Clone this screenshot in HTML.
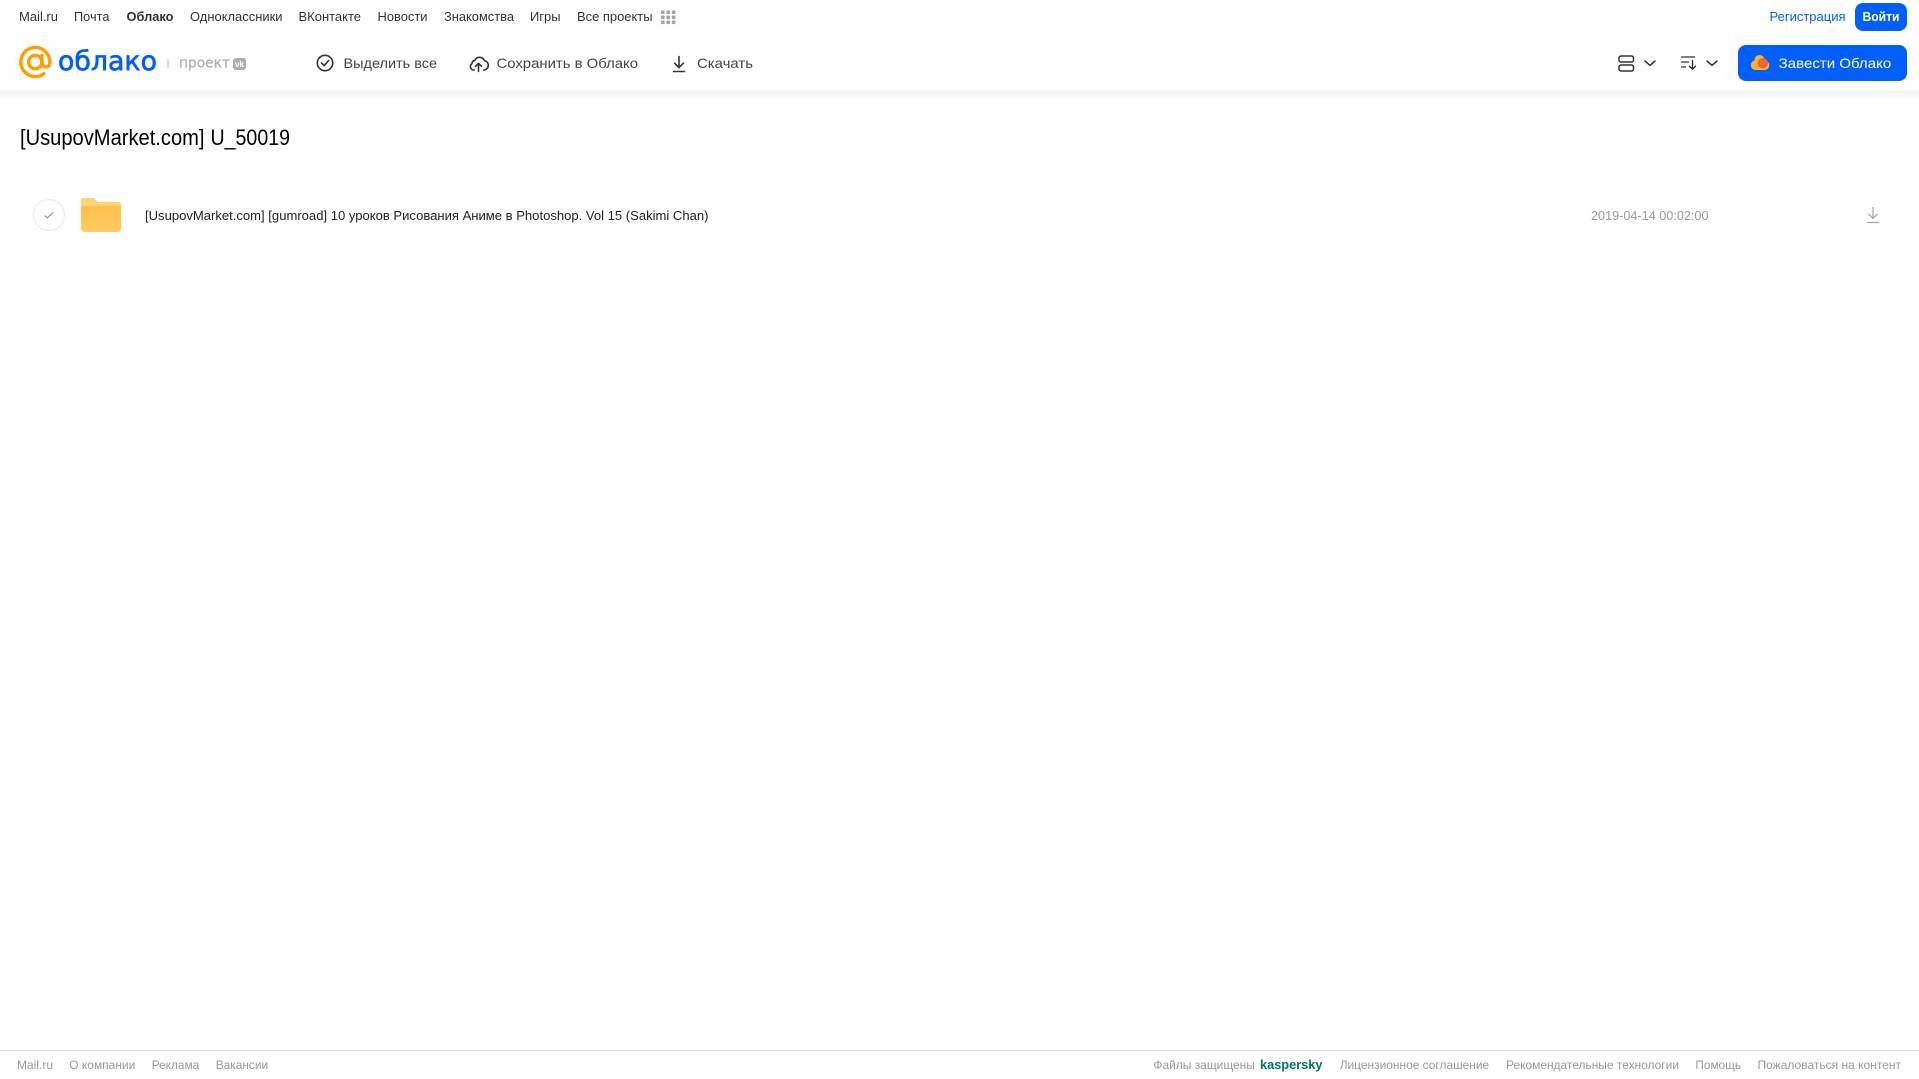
<!DOCTYPE html>
<html lang="ru"><head><meta charset="utf-8"><title>Облако</title>
<style>
html,body{margin:0;padding:0;background:#fff;width:1919px;height:1079px;overflow:hidden}
svg{display:block;position:absolute;left:0;top:0}
text{font-family:"Liberation Sans",sans-serif;white-space:pre}
.n{font-size:13px;fill:#333}
.h{font-size:14px;fill:#444}
.f{font-size:12px;fill:#999}
</style></head><body>
<svg width="1919" height="1079" viewBox="0 0 1919 1079" xmlns="http://www.w3.org/2000/svg">
<defs>
<linearGradient id="s" x1="0" y1="0" x2="0" y2="1"><stop offset="0" stop-color="#f3f3f3"/><stop offset="1" stop-color="#fff"/></linearGradient>
<linearGradient id="fo" x1="0" y1="0" x2="0" y2="1"><stop offset="0" stop-color="#ffc043"/><stop offset="1" stop-color="#ffca62"/></linearGradient>
</defs>
<rect x="0" y="90" width="1919" height="12" fill="url(#s)"/>

<!-- top nav -->
<g class="n">
<text class="n" x="19" y="21" textLength="39" lengthAdjust="spacingAndGlyphs">Mail.ru</text>
<text class="n" x="74" y="21" textLength="35.5" lengthAdjust="spacingAndGlyphs">Почта</text>
<text class="n" x="126.5" y="21" textLength="47" lengthAdjust="spacingAndGlyphs" font-weight="700">Облако</text>
<text class="n" x="190" y="21" textLength="92.5" lengthAdjust="spacingAndGlyphs">Одноклассники</text>
<text class="n" x="298.5" y="21" textLength="62.5" lengthAdjust="spacingAndGlyphs">ВКонтакте</text>
<text class="n" x="377.5" y="21" textLength="50" lengthAdjust="spacingAndGlyphs">Новости</text>
<text class="n" x="444" y="21" textLength="70" lengthAdjust="spacingAndGlyphs">Знакомства</text>
<text class="n" x="530" y="21" textLength="30.5" lengthAdjust="spacingAndGlyphs">Игры</text>
<text class="n" x="577" y="21" textLength="75.5" lengthAdjust="spacingAndGlyphs">Все проекты</text>
</g>
<g fill="#a3a3a3">
<rect x="661" y="10.5" width="3.6" height="3.6" rx=".8"/><rect x="666.4" y="10.5" width="3.6" height="3.6" rx=".8"/><rect x="671.8" y="10.5" width="3.6" height="3.6" rx=".8"/>
<rect x="661" y="15.5" width="3.6" height="3.6" rx=".8"/><rect x="666.4" y="15.5" width="3.6" height="3.6" rx=".8"/><rect x="671.8" y="15.5" width="3.6" height="3.6" rx=".8"/>
<rect x="661" y="20.5" width="3.6" height="3.6" rx=".8"/><rect x="666.4" y="20.5" width="3.6" height="3.6" rx=".8"/><rect x="671.8" y="20.5" width="3.6" height="3.6" rx=".8"/>
</g>
<text x="1769.5" y="21" font-size="13" fill="#005ff9" textLength="76" lengthAdjust="spacingAndGlyphs">Регистрация</text>
<rect x="1855" y="3" width="52" height="28" rx="8" fill="#005ff9"/>
<text x="1862.5" y="21" font-size="13" font-weight="700" fill="#fff" textLength="37" lengthAdjust="spacingAndGlyphs">Войти</text>

<!-- logo -->
<g fill="none" stroke="#ff9e00">
<circle cx="35.3" cy="62" r="6.7" stroke-width="3.4"/>
<path d="M42 55.5V63a3.9 3.9 0 0 0 7.8 0v-1a14.5 14.5 0 1 0-5.8 11.6" stroke-width="3.4" stroke-linecap="round"/>
</g>
<text x="58" y="70" font-size="27" style="font-family:'DejaVu Sans',sans-serif" fill="#005ff9" stroke="#005ff9" stroke-width=".7" textLength="99" lengthAdjust="spacingAndGlyphs">облако</text>
<rect x="167.5" y="59" width="1" height="9" fill="#b5b5b5"/>
<text x="179" y="67.5" font-size="14.5" style="font-family:'DejaVu Sans',sans-serif" fill="#aeaeae" stroke="#aeaeae" stroke-width=".25" textLength="51" lengthAdjust="spacingAndGlyphs">проект</text>
<rect x="233" y="58" width="13" height="12" rx="3" fill="#aeaeae"/>
<text x="235" y="67" font-size="8" font-weight="700" fill="#fff" textLength="9" lengthAdjust="spacingAndGlyphs">vk</text>

<!-- toolbar -->
<g fill="none" stroke="#333" stroke-width="1.6" stroke-linecap="round" stroke-linejoin="round">
<circle cx="325" cy="63" r="7.7"/>
<path d="M321.5 63l2.6 2.6 4.6-5"/>
<path d="M474.3 70h-.6a3.5 3.5 0 0 1-1.7-6.4 3 3 0 0 1 2.8-3.2 5.2 5.2 0 0 1 9.6.2 4.8 4.8 0 0 1 .2 9.4h-.8"/>
<path d="M478.5 71.5V63.5M475.6 66.2l2.9-2.9 2.9 2.9"/>
<path d="M679 56.5V67M674.6 63.2l4.4 4.4 4.4-4.4"/>
<path d="M673.5 71.5h11"/>
</g>
<text class="h" x="343.5" y="68" textLength="93.5" lengthAdjust="spacingAndGlyphs">Выделить все</text>
<text class="h" x="496.5" y="68" textLength="141.5" lengthAdjust="spacingAndGlyphs">Сохранить в Облако</text>
<text class="h" x="697" y="68" textLength="56" lengthAdjust="spacingAndGlyphs">Скачать</text>

<!-- view/sort -->
<g fill="none" stroke="#333" stroke-width="1.5" stroke-linecap="round" stroke-linejoin="round">
<rect x="1619" y="56" width="14.5" height="6" rx="2"/>
<rect x="1619" y="65" width="14.5" height="6" rx="2"/>
<path d="M1645 61l5 4.4 5-4.4"/>
<path d="M1707 61l5 4.4 5-4.4"/>
<path stroke-width="1.3" d="M1681.5 57h13M1681.5 62h7M1681.5 67h4"/>
<path stroke-width="1.4" d="M1692.5 60.5v8.5M1689.5 66.2l3 3 3-3"/>
</g>

<!-- CTA -->
<rect x="1738" y="45" width="169" height="36" rx="8" fill="#005ff9"/>
<g fill="#ffb136">
<circle cx="1755.6" cy="65.2" r="4.8"/>
<circle cx="1759.5" cy="60" r="5"/>
<circle cx="1764.5" cy="65.2" r="4.8"/>
<rect x="1755.6" y="62" width="9" height="8"/>
</g>
<circle cx="1762.8" cy="63.2" r="5.2" fill="#f2662f"/>
<text x="1778.7" y="68" font-size="14" fill="#fff" textLength="112.5" lengthAdjust="spacingAndGlyphs">Завести Облако</text>

<!-- title -->
<text x="20" y="145" font-size="22" fill="#000" textLength="184.5" lengthAdjust="spacingAndGlyphs">[UsupovMarket.com]</text>
<text x="210.5" y="145" font-size="22" fill="#000" textLength="79.5" lengthAdjust="spacingAndGlyphs">U_50019</text>

<!-- row -->
<circle cx="49" cy="215" r="15.5" fill="#fff" stroke="#ececec" stroke-width="1"/>
<path d="M44.8 215.6l2.6 2.2 5.8-5.4" fill="none" stroke="#999" stroke-width="1.3"/>
<path d="M81 201a3 3 0 0 1 3-3h8a4 4 0 0 1 3 1.4l2 2.6h21a3 3 0 0 1 3 3v24a3 3 0 0 1-3 3H84a3 3 0 0 1-3-3z" fill="url(#fo)"/>
<path d="M81 206v-5a3 3 0 0 1 3-3h8a4 4 0 0 1 3 1.4l2 2.6h21a3 3 0 0 1 3 3v1z" fill="#ffd272"/>
<text x="145" y="220" font-size="13" fill="#222" textLength="563.5" lengthAdjust="spacingAndGlyphs">[UsupovMarket.com] [gumroad] 10 уроков Рисования Аниме в Photoshop. Vol 15 (Sakimi Chan)</text>
<text x="1591" y="220" font-size="13" fill="#999" textLength="117.5" lengthAdjust="spacingAndGlyphs">2019-04-14 00:02:00</text>
<g fill="none" stroke="#a9a9a9" stroke-width="1.3">
<path d="M1873 207v11.5M1868.5 214l4.5 4.5 4.5-4.5"/>
<path d="M1867 222.5h12"/>
</g>

<!-- footer -->
<rect x="0" y="1050" width="1919" height="1" fill="#dcdcdc"/>
<text class="f" x="17" y="1069" textLength="36" lengthAdjust="spacingAndGlyphs">Mail.ru</text>
<text class="f" x="69.3" y="1069" textLength="66" lengthAdjust="spacingAndGlyphs">О компании</text>
<text class="f" x="151.7" y="1069" textLength="47.6" lengthAdjust="spacingAndGlyphs">Реклама</text>
<text class="f" x="215.7" y="1069" textLength="52.5" lengthAdjust="spacingAndGlyphs">Вакансии</text>
<text class="f" x="1153.4" y="1069" textLength="101.5" lengthAdjust="spacingAndGlyphs">Файлы защищены</text>
<text x="1260" y="1069" font-size="13" font-weight="700" fill="#00775f" textLength="62.5" lengthAdjust="spacingAndGlyphs">kaspersky</text>
<text class="f" x="1339.7" y="1069" textLength="149.5" lengthAdjust="spacingAndGlyphs">Лицензионное соглашение</text>
<text class="f" x="1506" y="1069" textLength="173" lengthAdjust="spacingAndGlyphs">Рекомендательные технологии</text>
<text class="f" x="1695.4" y="1069" textLength="45.6" lengthAdjust="spacingAndGlyphs">Помощь</text>
<text class="f" x="1757.5" y="1069" textLength="143.5" lengthAdjust="spacingAndGlyphs">Пожаловаться на контент</text>
</svg>
</body></html>
